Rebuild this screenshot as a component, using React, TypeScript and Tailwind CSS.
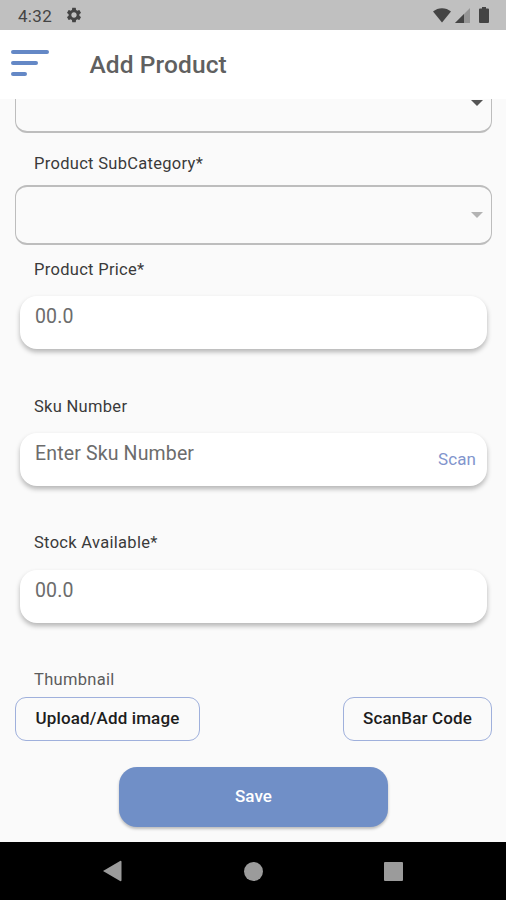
import type { ReactNode } from 'react';
import { MdSettings } from 'react-icons/md';

function StatusBar() {
  return (
    <div className="flex h-[30px] shrink-0 items-center bg-[#c0c0c0] pr-[17px] pl-[18px] text-[#444]">
      <span className="w-[47px] pt-px text-[17px] leading-[30px] tracking-[0.3px]">4:32</span>
      <MdSettings className="h-[18px] w-[18px]" />
      <div className="ml-auto flex items-center">
        <svg width="18" height="15" viewBox="0 0 18 15" fill="currentColor">
          <path d="M0 3.6C5-1 13-1 18 3.6L9 14.6z" />
        </svg>
        <svg width="15" height="15" viewBox="0 0 15 15" className="ml-[4px]" fill="currentColor">
          <path d="M0 15L15 0v15z" opacity="0.35" />
          <path d="M0 15L9 6v9z" />
        </svg>
        <svg width="10" height="16" viewBox="0 0 10 16" className="ml-[9px]" fill="currentColor">
          <path d="M3 0h4v1.600h2q1 0 1 1V15q0 1-1 1H1q-1 0-1-1V2.600q0-1 1-1h2z" />
        </svg>
      </div>
    </div>
  );
}

function Header() {
  return (
    <header className="flex h-[69px] shrink-0 items-center bg-white pl-[10.5px]">
      <button aria-label="Menu" className="flex w-[79px] flex-col gap-[7px] pb-[4px]">
        <span className="h-[4px] w-[38px] rounded-full bg-[#6488c6]" />
        <span className="h-[4px] w-[27px] rounded-full bg-[#6488c6]" />
        <span className="h-[4px] w-[16px] rounded-full bg-[#6488c6]" />
      </button>
      <h1 className="pt-px text-[24.5px] leading-[30px] font-medium tracking-[0.1px] text-[#606060]">Add Product</h1>
    </header>
  );
}

function Label({ children, className = 'text-[#3a3a3a]' }: { children: ReactNode; className?: string }) {
  return (
    <div className={`pl-[19px] text-[16.5px] leading-[20px] tracking-[0.3px] ${className}`}>
      {children}
    </div>
  );
}

function Select({ disabled = false }: { disabled?: boolean }) {
  return (
    <div className="flex h-[60px] shrink-0 items-center justify-end rounded-[12px] border border-y-2 border-[#bdbdbd] pr-[8px]">
      <svg width="12" height="6" viewBox="0 0 12 6" className={disabled ? 'text-[#b3b3b3]' : 'text-[#555]'}>
        <path d="M0 0h12L6 6z" fill="currentColor" />
      </svg>
    </div>
  );
}

function Field({ placeholder, action }: { placeholder: string; action?: string }) {
  return (
    <div className="mx-[5px] flex h-[53px] justify-between rounded-[17px] bg-white pr-[11px] pl-[15px] shadow-[0_3px_5px_rgba(0,0,0,0.28)]">
      <span className="pt-[9px] text-[19.5px] leading-[24px] tracking-[0.15px] text-[#6c6c6c]">{placeholder}</span>
      {action && <button className="text-[17px] leading-[53px] tracking-[0.1px] text-[#8295cd]">{action}</button>}
    </div>
  );
}

function OutlineButton({ children, className }: { children: ReactNode; className: string }) {
  return (
    <button
      className={`h-[44px] rounded-[11px] border-[1.500px] border-[#9fb0dc] text-[17px] font-medium tracking-[0.13px] text-[#1d1d1d] ${className}`}
    >
      {children}
    </button>
  );
}

function NavBar() {
  return (
    <nav className="flex h-[58px] shrink-0 items-center justify-between bg-black pr-[103px] pl-[103px] text-[#9b9b9b]">
      <svg width="19" height="22" viewBox="0 0 19 22" fill="currentColor">
        <path d="M0 11L17.500 0.700q1 0 1 1v18.600q0 1-1 1z" />
      </svg>
      <span className="h-[19px] w-[19px] rounded-full bg-[#9b9b9b]" />
      <span className="h-[19px] w-[19px] rounded-[1px] bg-[#9b9b9b]" />
    </nav>
  );
}

export default function App() {
  return (
    <div className="flex h-[900px] w-[506px] flex-col overflow-hidden bg-[#fafafa] font-['Roboto',sans-serif]">
      <StatusBar />
      <Header />
      <main className="flex h-[743px] flex-col overflow-hidden pr-[14px] pl-[15px]">
        <div className="-mt-[26px]">
          <Select />
        </div>
        <div className="mt-[21px]">
          <Label>Product SubCategory*</Label>
        </div>
        <div className="mt-[11px]">
          <Select disabled />
        </div>
        <div className="mt-[15px]">
          <Label>Product Price*</Label>
        </div>
        <div className="mt-[16px]">
          <Field placeholder="00.0" />
        </div>
        <div className="mt-[48px]">
          <Label>Sku Number</Label>
        </div>
        <div className="mt-[16px]">
          <Field placeholder="Enter Sku Number" action="Scan" />
        </div>
        <div className="mt-[47px]">
          <Label>Stock Available*</Label>
        </div>
        <div className="mt-[17px]">
          <Field placeholder="00.0" />
        </div>
        <div className="mt-[47px]">
          <Label className="text-[#5c5c5c]">Thumbnail</Label>
        </div>
        <div className="mt-[7px] flex justify-between">
          <OutlineButton className="w-[185px]">Upload/Add image</OutlineButton>
          <OutlineButton className="w-[149px]">ScanBar Code</OutlineButton>
        </div>
        <button className="mt-[26px] ml-[104px] h-[60px] w-[269px] shrink-0 rounded-[18px] bg-[#708fc7] text-[17px] font-medium tracking-[0.1px] text-white shadow-[0_2px_3px_rgba(0,0,0,0.25)]">
          Save
        </button>
      </main>
      <NavBar />
    </div>
  );
}
